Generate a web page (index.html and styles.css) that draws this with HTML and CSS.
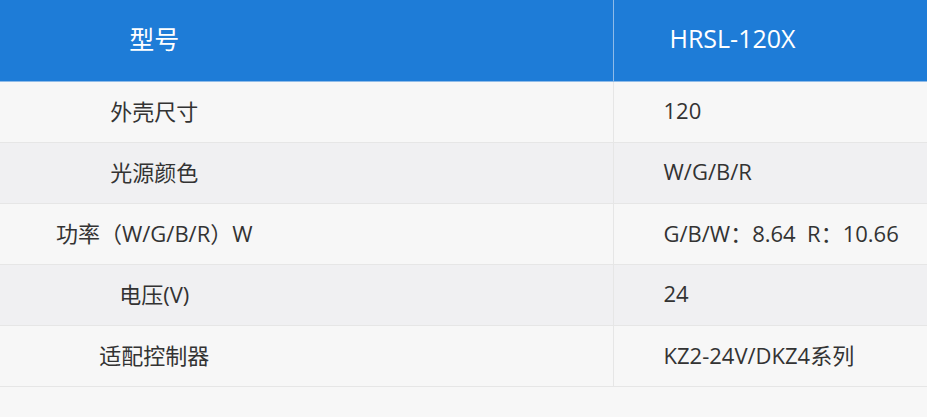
FILE: index.html
```html
<!DOCTYPE html>
<html lang="zh-CN">
<head>
    <meta charset="UTF-8">
    <meta name="viewport" content="width=device-width, initial-scale=1.0">
    <title>HRSL-120X 参数</title>
<link rel="stylesheet" href="styles.css">
</head>
<body>
    <table class="spec-table">
        <thead>
            <tr>
                <th class="col-name">型号</th>
                <th class="col-value">HRSL-120X</th>
            </tr>
        </thead>
        <tbody>
            <tr>
                <td class="col-name">外壳尺寸</td>
                <td class="col-value">120</td>
            </tr>
            <tr>
                <td class="col-name">光源颜色</td>
                <td class="col-value">W/G/B/R</td>
            </tr>
            <tr>
                <td class="col-name">功率（W/G/B/R）W</td>
                <td class="col-value">G/B/W：8.64&nbsp;&nbsp;R：10.66</td>
            </tr>
            <tr>
                <td class="col-name">电压(V)</td>
                <td class="col-value">24</td>
            </tr>
            <tr>
                <td class="col-name">适配控制器</td>
                <td class="col-value">KZ2-24V/DKZ4系列</td>
            </tr>
        </tbody>
    </table>
</body>
</html>
```

FILE: styles.css
```css
:root {
    --primary-color: #1e7cd7;
    --text-color: #333;
    --row-light: #f7f7f7;
    --row-dark: #f0f0f2;
    --line: #e6e6e6;
}

* {
    margin: 0;
    padding: 0;
    box-sizing: border-box;
    font-family: "Open Sans", "Noto Sans CJK SC", sans-serif;
}

body {
    background-color: var(--row-light);
}

.spec-table {
    width: 927px;
    border-collapse: collapse;
    table-layout: fixed;
}

.spec-table th {
    height: 81px;
    padding-bottom: 5px;
    background-color: var(--primary-color);
    color: #fff;
    font-size: 25px;
    font-weight: normal;
    border-bottom: 1px solid #8fbbe8;
}

.spec-table th.col-name { border-right: 1px solid #8fbbe8; }

.spec-table td {
    height: 61px;
    padding-bottom: 4px;
    color: var(--text-color);
    font-size: 22px;
    border-bottom: 1px solid var(--line);
}

.spec-table td.col-name { border-right: 1px solid var(--line); }

.col-name {
    width: 613px;
    text-align: center;
    padding-right: 304px;
}

.col-value {
    text-align: left;
    padding-left: 50px;
}

th.col-value { padding-left: 56px; }

tbody tr:nth-child(odd) { background-color: var(--row-light); }
tbody tr:nth-child(even) { background-color: var(--row-dark); }
```
